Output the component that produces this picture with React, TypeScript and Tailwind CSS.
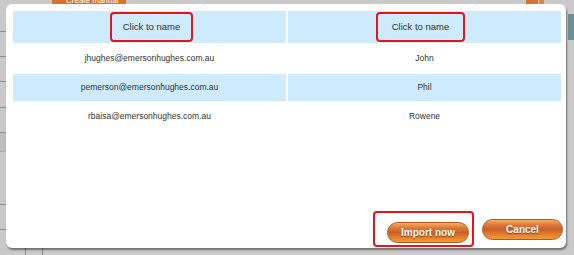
import React from 'react';

interface Contact {
    email: string;
    name: string;
}

const contacts: Contact[] = [
    { email: 'jhughes@emersonhughes.com.au', name: 'John' },
    { email: 'pemerson@emersonhughes.com.au', name: 'Phil' },
    { email: 'rbaisa@emersonhughes.com.au', name: 'Rowene' },
];

const btn =
    "h-[21px] rounded-full border border-[#b8561c] bg-[linear-gradient(#f6b060_0%,#e0783a_25%,#c5612a_50%,#e07828_70%,#f39a3a_100%)] text-white text-[10px] font-bold [text-shadow:0_1px_1px_#7a3a10] shadow-[0_1px_0_#fff]";

const App: React.FC = () => {
    return (
        <div className="relative w-[574px] h-[255px] overflow-hidden bg-[#c9c9c9] font-['Liberation_Sans',Arial,sans-serif]">
            {/* page behind the dialog */}
            <div className="absolute left-0 top-0 w-[6px] h-full flex flex-col">
                <div className="h-[32px] border-b border-[#8c8c8c]" />
                <div className="h-[25px] border-b border-[#8c8c8c]" />
                <div className="h-[25px] border-b border-[#8c8c8c]" />
                <div className="h-[26px] border-b border-[#8c8c8c]" />
                <div className="h-[25px] border-b border-[#8c8c8c]" />
                <div className="h-[19px] border-b border-[#a8a8a8] bg-[#bdbdbd]" />
                <div className="h-[53px] border-b border-[#8c8c8c]" />
                <div className="h-[25px] border-b border-[#8c8c8c]" />
            </div>
            <div className="absolute left-[52px] top-0 w-[74px] h-[5px] bg-[#d9732c] text-[8px] text-white leading-[2px] pl-[14px]">Create manual</div>
            <div className="absolute left-[526px] top-0 w-[12px] h-[5px] bg-[#d9732c]" />
            <div className="absolute left-[539px] top-0 w-[5px] h-[5px] bg-[#e08838]" />
            <div className="absolute left-[568px] top-[14px] w-[6px] h-[26px] bg-[#6f8f98]" />
            <div className="absolute left-[25px] top-[248px] w-[18px] h-[7px] border-x border-[#8c8c8c]" />

            {/* dialog */}
            <div className="absolute left-[6px] top-[4px] w-[560px] h-[244px] bg-white rounded-[6px] shadow-[1px_2px_2px_rgba(0,0,0,0.45)] flex flex-col pl-[7px] pr-[5px] pt-[7px]">
                <table className="border-separate border-spacing-[2px] -mx-[2px] -mt-[2px] w-[552px] text-[#333]">
                    <thead>
                        <tr className="bg-[#cdebfc] h-[32px]">
                            <th className="font-normal p-0">
                                <div className="flex justify-center">
                                    <span className="h-[30px] w-[83px] flex items-center justify-center border-2 border-[#e4141c] rounded-[4px] text-[9.5px] ml-[4px]">Click to name</span>
                                </div>
                            </th>
                            <th className="font-normal p-0">
                                <div className="flex justify-center">
                                    <span className="h-[30px] w-[89px] flex items-center justify-center border-2 border-[#e4141c] rounded-[4px] text-[9.5px] -ml-[8px]">Click to name</span>
                                </div>
                            </th>
                        </tr>
                    </thead>
                    <tbody>
                        {contacts.map((c, i) => (
                            <tr key={c.email} className={(i % 2 === 1 ? 'bg-[#cdebfc] ' : 'bg-white ') + 'h-[27px]'}>
                                <td className="w-[273px] text-center text-[8.5px] p-0">{c.email}</td>
                                <td className="w-[273px] text-center text-[8.5px] p-0">{c.name}</td>
                            </tr>
                        ))}
                    </tbody>
                </table>

                <div className="mt-auto mb-[1px] -mr-[2px] flex justify-end items-start gap-[8px]">
                    <div className="border-2 border-[#e4141c] rounded-[4px] pl-[12px] pr-[3px] pt-[6px] pb-[2px]">
                        <button className={btn + " w-[82px]"}>Import now</button>
                    </div>
                    <button className={btn + " w-[81px] mt-[8px]"}>Cancel</button>
                </div>
            </div>
        </div>
    );
};

export default App;
